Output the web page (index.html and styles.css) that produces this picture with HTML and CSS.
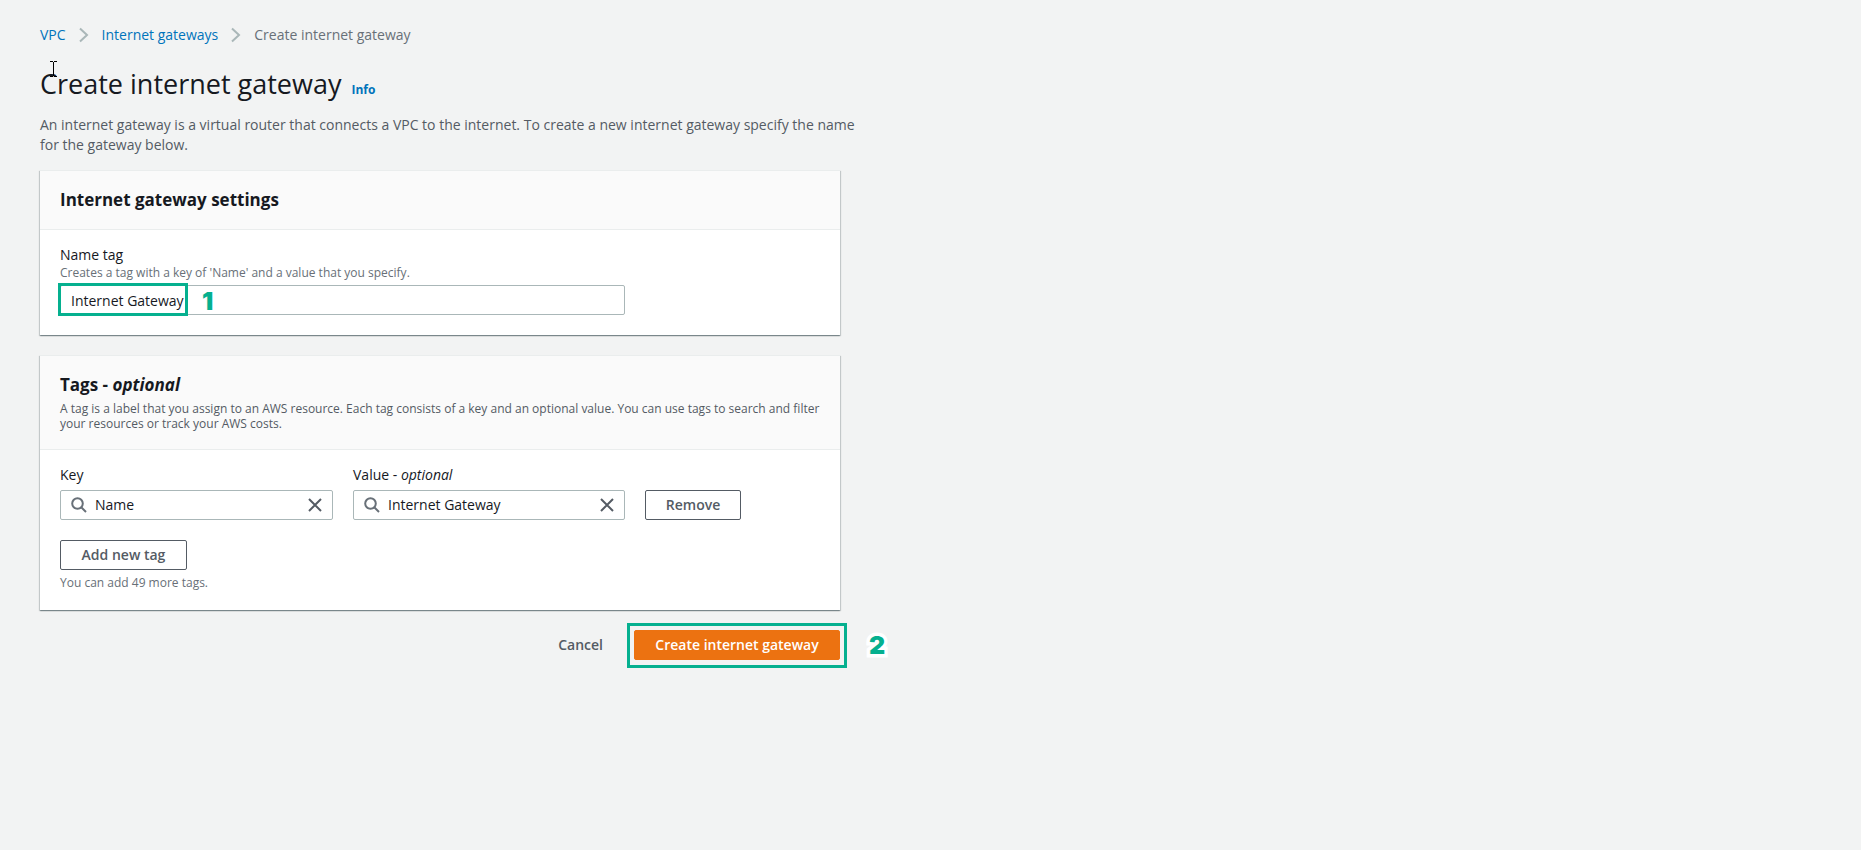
FILE: index.html
```html
<!DOCTYPE html>
<html lang="en">
<head>
<meta charset="utf-8">
<title>Create internet gateway</title>
<link rel="stylesheet" href="styles.css">
</head>
<body>
<main class="page">
  <nav class="breadcrumb" aria-label="Breadcrumb">
    <a href="#">VPC</a>
    <svg class="chevron" viewBox="0 0 10 16" aria-hidden="true"><path d="M1 1.5l7 6.5-7 6.5"/></svg>
    <a href="#">Internet gateways</a>
    <svg class="chevron" viewBox="0 0 10 16" aria-hidden="true"><path d="M1 1.5l7 6.5-7 6.5"/></svg>
    <span>Create internet gateway</span>
  </nav>

  <header class="title">
    <h1>Create internet gateway</h1>
    <a class="info" href="#">Info</a>
    <svg class="cursor" viewBox="0 0 8 16" aria-hidden="true"><path d="M0 .5h3M4 .5h3M3.500 1v14M0 15.500h3M4 15.500h3"/></svg>
  </header>
  <p class="intro">An internet gateway is a virtual router that connects a VPC to the internet. To create a new internet gateway specify the name<br>for the gateway below.</p>

  <form>
    <section class="panel">
      <div class="panel-head"><h2>Internet gateway settings</h2></div>
      <div class="panel-body">
        <label class="label" for="name-tag">Name tag</label>
        <p class="hint" id="name-hint">Creates a tag with a key of 'Name' and a value that you specify.</p>
        <div class="name-field">
          <input class="text-input" id="name-tag" type="text" value="Internet Gateway" aria-describedby="name-hint">
          <span class="mark mark-name"></span>
          <span class="step step-one">1</span>
        </div>
      </div>
    </section>

    <section class="panel">
      <div class="panel-head">
        <h2>Tags - <em>optional</em></h2>
        <p class="head-text">A tag is a label that you assign to an AWS resource. Each tag consists of a key and an optional value. You can use tags to search and filter<br>your resources or track your AWS costs.</p>
      </div>
      <div class="panel-body tags-body">
        <div class="tag-row">
          <div>
            <label class="label" for="tag-key">Key</label>
            <div class="search">
              <svg class="icon glass" viewBox="0 0 16 16" aria-hidden="true"><circle cx="6.500" cy="6.500" r="5.300"/><path d="M10.500 10.500l4.500 4.500"/></svg>
              <input id="tag-key" type="text" value="Name">
              <button class="clear" type="button" aria-label="Clear key"><svg class="icon" viewBox="0 0 16 16" aria-hidden="true"><path d="M2 2l12 12M14 2L2 14"/></svg></button>
            </div>
          </div>
          <div>
            <label class="label" for="tag-value">Value - <em>optional</em></label>
            <div class="search">
              <svg class="icon glass" viewBox="0 0 16 16" aria-hidden="true"><circle cx="6.500" cy="6.500" r="5.300"/><path d="M10.500 10.500l4.500 4.500"/></svg>
              <input id="tag-value" type="text" value="Internet Gateway">
              <button class="clear" type="button" aria-label="Clear value"><svg class="icon" viewBox="0 0 16 16" aria-hidden="true"><path d="M2 2l12 12M14 2L2 14"/></svg></button>
            </div>
          </div>
          <button class="btn btn-remove" type="button">Remove</button>
        </div>
        <button class="btn btn-add" type="button">Add new tag</button>
        <p class="hint">You can add 49 more tags.</p>
      </div>
    </section>

    <div class="actions">
      <button class="btn btn-link" type="button">Cancel</button>
      <div class="submit">
        <button class="btn btn-primary" type="submit">Create internet gateway</button>
        <span class="mark mark-submit"></span>
        <span class="step step-two">2</span>
      </div>
    </div>
  </form>
</main>
</body>
</html>
```

FILE: styles.css
```css
* { box-sizing: border-box; }
body {
  margin: 0;
  background: #f2f3f3;
  color: #16191f;
  font: 14px/20px "Open Sans", "Noto Sans", sans-serif;
}
h1, h2, p { margin: 0; }
a { color: #0073bb; text-decoration: none; }
input, button { font: inherit; color: inherit; }
.page { max-width: 880px; padding: 25px 40px; }

.breadcrumb { display: flex; align-items: center; gap: 13px; color: #687078; }
.chevron { width: 10px; height: 16px; fill: none; stroke: #aab7b8; stroke-width: 2; }

.title { position: relative; display: flex; align-items: baseline; gap: 10px; margin-top: 21px; }
h1 { font-size: 27px; line-height: 36px; font-weight: 400; }
.info { font-size: 12px; font-weight: 700; }
.cursor {
  position: absolute; left: 10px; top: -5px; width: 8px; height: 16px;
  fill: none; stroke: #000; stroke-width: 1; shape-rendering: crispEdges;
}
.intro { margin-top: 13px; color: #545b64; white-space: nowrap; }

.panel {
  margin-top: 20px;
  background: #fff;
  border-top: 1px solid #eaeded;
  box-shadow: 0 1px 1px 0 rgba(0, 28, 36, .3), 1px 1px 1px 0 rgba(0, 28, 36, .15), -1px 1px 1px 0 rgba(0, 28, 36, .15);
}
.intro + form .panel:first-child { margin-top: 15px; }
.panel-head { padding: 18px 20px; background: #fafafa; border-bottom: 1px solid #eaeded; }
.panel-body { padding: 15px 20px 20px; }
.tags-body { padding-bottom: 19px; }
h2 { font-size: 17px; line-height: 22px; font-weight: 700; }
.head-text { margin-top: 5px; color: #545b64; font-size: 12px; line-height: 15px; white-space: nowrap; }
.label { display: block; }
.hint { color: #687078; font-size: 12px; line-height: 16px; }

.text-input, .search { height: 30px; border: 1px solid #aab7b8; border-radius: 2px; background: #fff; }
.name-field { position: relative; width: 565px; max-width: 100%; margin-top: 4px; }
.text-input { display: block; width: 100%; padding: 0 10px; }

.tag-row { display: grid; grid-template-columns: 273px 272px 96px; gap: 20px; align-items: end; }
.search { display: flex; align-items: center; gap: 8px; margin-top: 5px; padding: 0 9px 0 10px; }
.search input { flex: 1; min-width: 0; padding: 0; border: 0; outline: 0; background: none; }
.icon { display: block; flex: none; width: 16px; height: 16px; fill: none; stroke: #545b64; stroke-width: 2; }
.glass { stroke: #687078; }
.clear { padding: 0; border: 0; background: none; }

.btn {
  height: 30px; padding: 0 20px; border: 1px solid #545b64; border-radius: 2px;
  background: #fff; color: #545b64; font-weight: 600; white-space: nowrap;
}
.btn-remove { padding: 0; }
.btn-add { display: block; width: 127px; margin: 20px 0 5px; padding: 0; }
.btn-link { border-color: transparent; background: none; }
.btn-primary { width: 206px; padding: 0; border-color: #ec7211; background: #ec7211; color: #fff; }

.actions { display: flex; justify-content: flex-end; gap: 10px; margin-top: 20px; }
.submit { position: relative; }

.mark { position: absolute; border: 3px solid #05b08f; pointer-events: none; }
.mark-name { left: -2px; top: -2px; width: 130px; height: 33px; }
.mark-submit { inset: -7px -7px -8px; }
.step {
  position: absolute; color: #05b08f; font: 900 25px/24px Inter, "Open Sans", sans-serif;
  -webkit-text-stroke: 7px #fff; paint-order: stroke fill;
}
.step-one { left: 142px; top: 4px; }
.step-two { left: calc(100% + 29px); top: 3px; }
```
